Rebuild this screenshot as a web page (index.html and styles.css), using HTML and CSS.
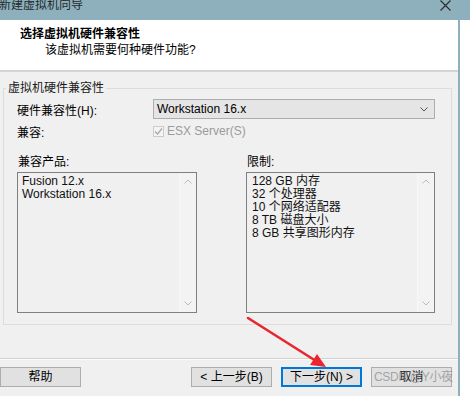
FILE: index.html
```html
<!DOCTYPE html>
<html lang="zh-CN">
<head>
    <meta charset="UTF-8">
    <title>新建虚拟机向导</title>
    <link rel="stylesheet" href="styles.css">
</head>
<body>

    <div class="titlebar">
        <span class="title">新建虚拟机向导</span>
        <svg class="close" width="11" height="11" viewBox="0 0 11 11">
            <path d="M0.5 0.5 L10.5 10.5 M10.5 0.5 L0.5 10.5" stroke="#2b2b2b" stroke-width="1.1" fill="none"/>
        </svg>
    </div>

    <div class="dialog">
        <div class="header">
            <div class="head-title">选择虚拟机硬件兼容性</div>
            <div class="head-sub">该虚拟机需要何种硬件功能?</div>
        </div>

        <fieldset class="group">
            <legend>虚拟机硬件兼容性</legend>

            <div class="row">
                <span class="label">硬件兼容性(H):</span>
                <div class="combo">
                    <span>Workstation 16.x</span>
                    <svg width="8" height="5" viewBox="0 0 8 5">
                        <polyline points="0.5,0.5 4,4 7.5,0.5" stroke="#555" stroke-width="1" fill="none"/>
                    </svg>
                </div>
            </div>

            <div class="row row-check">
                <span class="label">兼容:</span>
                <span class="checkbox">
                    <svg width="9" height="9" viewBox="0 0 9 9">
                        <polyline points="1,4.5 3.5,7 8,1.5" stroke="#a8a8a8" stroke-width="1.3" fill="none"/>
                    </svg>
                </span>
                <span class="disabled">ESX Server(S)</span>
            </div>

            <div class="columns">
                <div class="col col-left">
                    <div class="col-label">兼容产品:</div>
                    <div class="listbox">
                        <div class="items items-left">
                            <div>Fusion 12.x</div>
                            <div>Workstation 16.x</div>
                        </div>
                        <div class="scroll">
                            <svg width="8" height="5" viewBox="0 0 8 5"><polyline points="0.5,4.5 4,1 7.5,4.5" stroke="#bcbcbc" stroke-width="1" fill="none"/></svg>
                            <svg width="8" height="5" viewBox="0 0 8 5"><polyline points="0.5,0.5 4,4 7.5,0.5" stroke="#bcbcbc" stroke-width="1" fill="none"/></svg>
                        </div>
                    </div>
                </div>
                <div class="col col-right">
                    <div class="col-label">限制:</div>
                    <div class="listbox">
                        <div class="items">
                            <div>128 GB 内存</div>
                            <div>32 个处理器</div>
                            <div>10 个网络适配器</div>
                            <div>8 TB 磁盘大小</div>
                            <div>8 GB 共享图形内存</div>
                        </div>
                        <div class="scroll">
                            <svg width="8" height="5" viewBox="0 0 8 5"><polyline points="0.5,4.5 4,1 7.5,4.5" stroke="#bcbcbc" stroke-width="1" fill="none"/></svg>
                            <svg width="8" height="5" viewBox="0 0 8 5"><polyline points="0.5,0.5 4,4 7.5,0.5" stroke="#bcbcbc" stroke-width="1" fill="none"/></svg>
                        </div>
                    </div>
                </div>
            </div>
        </fieldset>

        <div class="footer">
            <button class="btn btn-help">帮助</button>
            <button class="btn">&lt; 上一步(B)</button>
            <button class="btn btn-default">下一步(N) &gt;</button>
            <button class="btn btn-cancel">取消<span class="watermark">CSDN @Y小夜</span></button>
        </div>
    </div>

    <!-- red annotation arrow -->
    <svg class="arrow" width="470" height="396" viewBox="0 0 470 396">
        <line x1="248" y1="318" x2="316" y2="361" stroke="#e8262b" stroke-width="2.6" stroke-linecap="round"/>
        <polygon points="326,367 310,365 317,354" fill="#e8262b"/>
    </svg>

</body>
</html>
```

FILE: styles.css
```css
body {
    margin: 0;
    padding: 0;
    background-color: #fff;
    font-family: "Liberation Sans", "Noto Sans CJK SC", sans-serif;
    font-size: 12px;
    color: #000;
    width: 470px;
    height: 396px;
    overflow: hidden;
    position: relative;
}

.titlebar {
    height: 20px;
    background-color: #8eb0bc;
    display: flex;
    justify-content: space-between;
    align-items: flex-start;
}

.title {
    margin-left: -1px;
    margin-top: -1px;
    line-height: 13px;
    color: #1e2a2e;
}

.close {
    margin: 0 19px 0 0;
}

.dialog {
    width: 458px;
    height: 376px;
    border-right: 2px solid #8eb0bc;
    background-color: #f0f0f0;
    display: flex;
    flex-direction: column;
}

.header {
    height: 50px;
    background-color: #fff;
    border-bottom: 2px solid #d4d4d4;
    padding-top: 7px;
    box-sizing: border-box;
    height: 52px;
}

.head-title {
    font-weight: bold;
    line-height: 14px;
    margin-left: 20px;
}

.head-sub {
    line-height: 14px;
    margin-top: 2px;
    margin-left: 45px;
}

/* group box */
.group {
    margin: 9px 6px 0 3px;
    padding: 0 16px 11px 13px;
    border: 1px solid #dcdcdc;
    min-width: 0;
}

.group legend {
    padding: 0 2px;
    margin-left: -11px;
    line-height: 14px;
    color: #1a1a1a;
}

.row {
    display: flex;
    align-items: center;
    margin-top: 4px;
    height: 20px;
}

.row-check {
    height: 16px;
}

.label {
    width: 136px;
    flex-shrink: 0;
}

.combo {
    flex: 1;
    height: 20px;
    box-sizing: border-box;
    border: 1px solid #adadad;
    background-color: #e5e5e5;
    display: flex;
    align-items: center;
    justify-content: space-between;
    padding: 0 6px 0 3px;
}

.checkbox {
    width: 11px;
    height: 11px;
    box-sizing: border-box;
    border: 1px solid #cccccc;
    background-color: #f4f4f4;
    display: flex;
    align-items: center;
    justify-content: center;
    margin-right: 3px;
}

.disabled {
    color: #9b9b9b;
}

.columns {
    display: flex;
    gap: 49px;
    margin-top: 16px;
}

.col-left {
    width: 180px;
}

.col-right {
    flex: 1;
}

.col-label {
    line-height: 14px;
    margin-bottom: 3px;
    margin-left: 1px;
}

.listbox {
    height: 141px;
    box-sizing: border-box;
    border: 1px solid #7f7f7f;
    background-color: #f0f0f0;
    display: flex;
}

.items {
    flex: 1;
    padding: 2px 0 0 5px;
    line-height: 13px;
    color: #111;
}

.items-left {
    padding-left: 4px;
}

.scroll {
    width: 16px;
    border-left: 1px solid #f7f7f7;
    background-color: #f3f3f3;
    display: flex;
    flex-direction: column;
    justify-content: space-between;
    align-items: center;
    padding: 6px 0 6px;
}

/* buttons */
.footer {
    margin-top: 33px;
    border-top: 1px solid #d2d2d2;
    box-shadow: inset 0 1px 0 #fbfbfb;
    padding: 8px 6px 0 0;
    display: flex;
    gap: 9px;
}

.btn {
    width: 81px;
    height: 20px;
    box-sizing: border-box;
    border: 1px solid #adadad;
    background-color: #e1e1e1;
    font-family: "Liberation Sans", "Noto Sans CJK SC", sans-serif;
    font-size: 12px;
    line-height: 16px;
    color: #000;
    padding: 0;
    margin: 0;
}

.btn-help {
    margin-right: auto;
}

.btn-default {
    border: 2px solid #0078d7;
}

.btn-cancel {
    position: relative;
    color: #222;
}

.watermark {
    position: absolute;
    left: 2px;
    top: 1px;
    white-space: nowrap;
    color: rgba(140, 140, 140, 0.75);
    letter-spacing: -0.3px;
}

.arrow {
    position: absolute;
    top: 0;
    left: 0;
    pointer-events: none;
}
```
